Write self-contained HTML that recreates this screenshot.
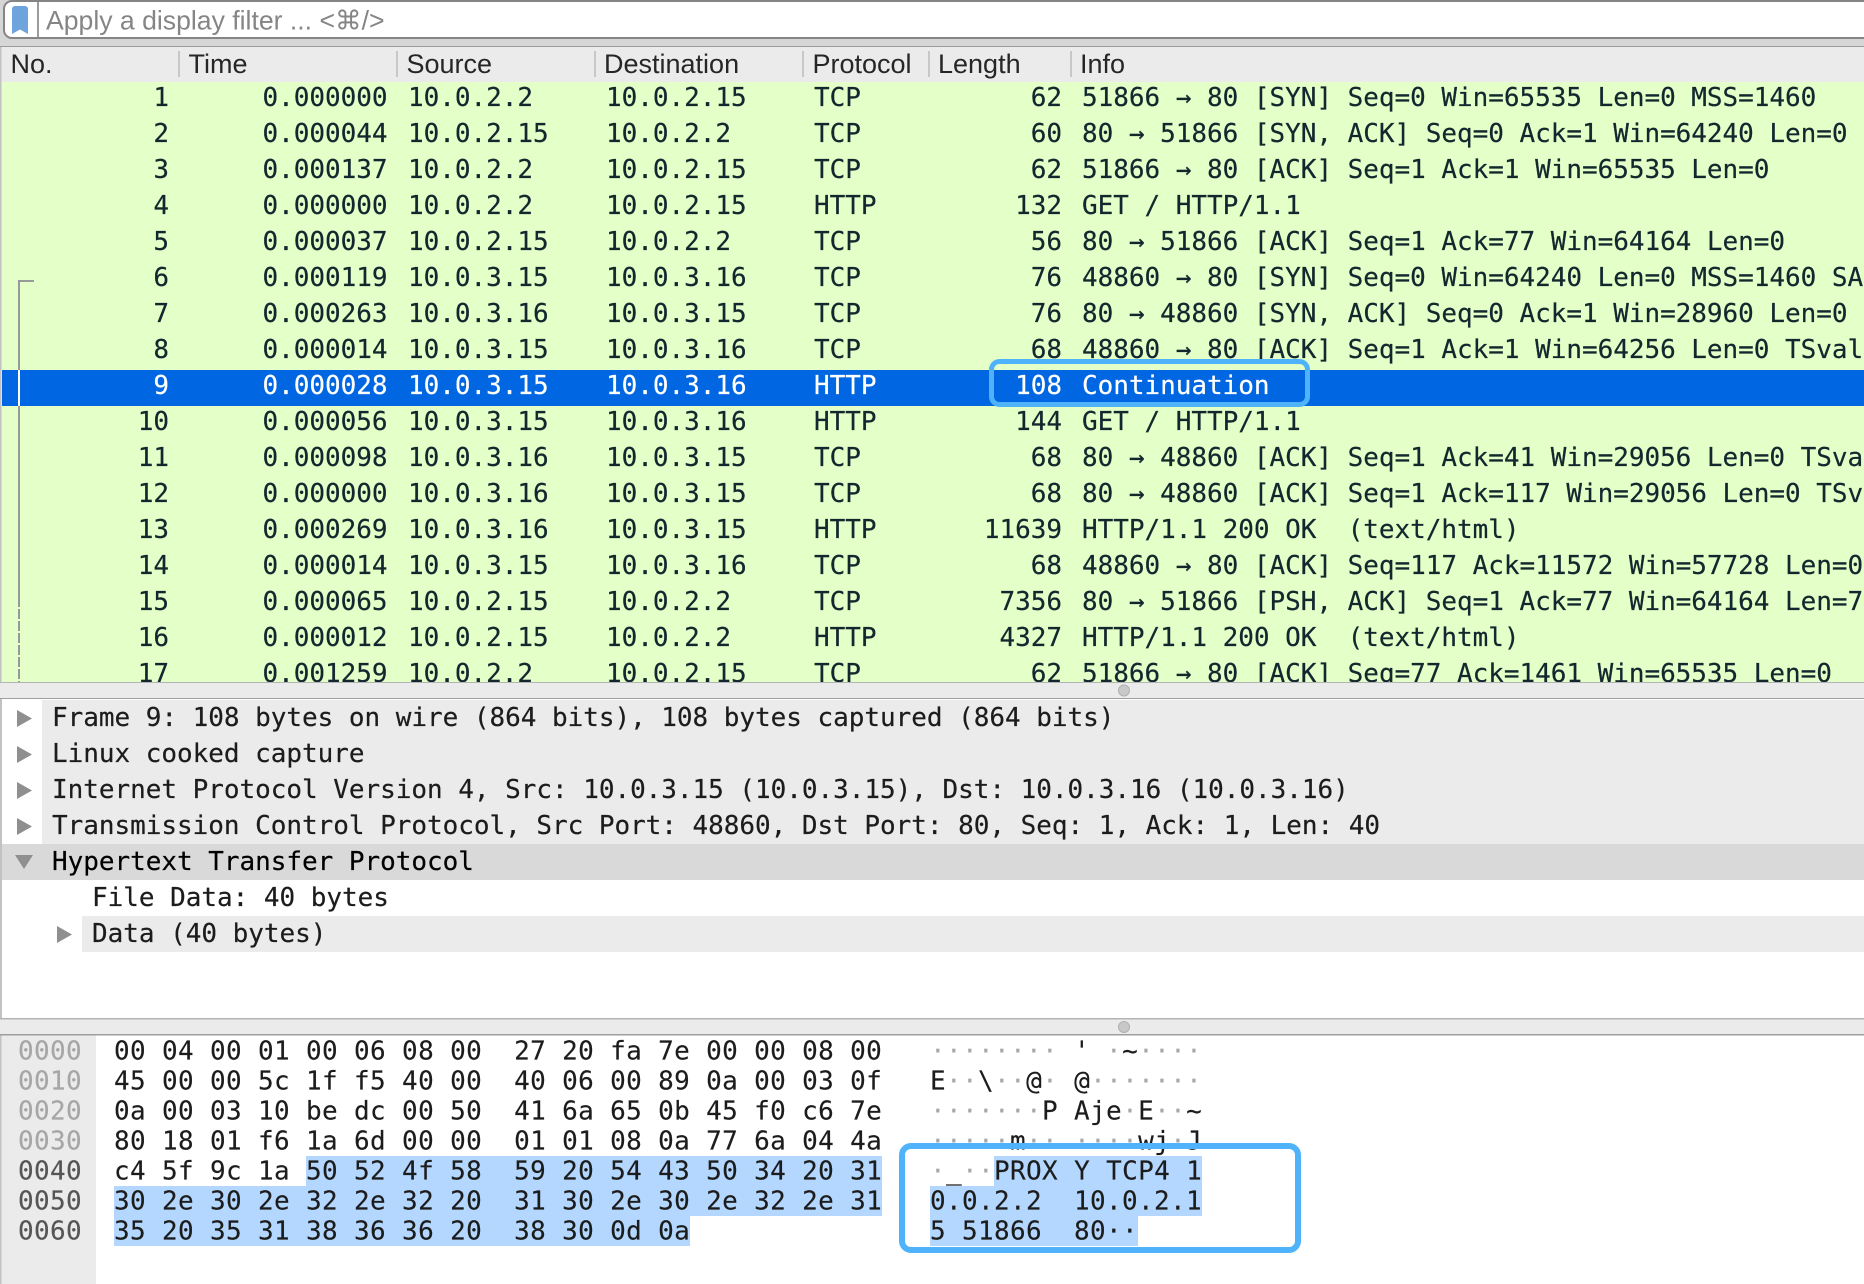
<!DOCTYPE html>
<html><head><meta charset="utf-8"><title>Wireshark</title>
<style>
html,body{margin:0;padding:0;background:#fff;width:1864px;height:1284px;overflow:hidden}
svg{display:block}
text{white-space:pre}
.m{font-family:"DejaVu Sans Mono","Liberation Mono",monospace;font-size:26px;letter-spacing:-.03px;fill:#12272e;stroke:#12272e;stroke-width:.2px}
.s{font-family:"Liberation Sans","DejaVu Sans",sans-serif;font-size:27px;fill:#262626}
.e{text-anchor:end}
.w{fill:#fff;stroke:#fff}
.t{fill:#1c1c1c;stroke:#1c1c1c}
.h{font-family:"DejaVu Sans Mono","Liberation Mono",monospace;font-size:26px;letter-spacing:.35px;fill:#1c1c1c;stroke:#1c1c1c;stroke-width:.15px}
.d{fill:#a8a8a8;stroke:none}
.o1{fill:#a6a6a6;stroke:#a6a6a6}
.o2{fill:#555;stroke:#555}
</style></head><body>
<svg xmlns="http://www.w3.org/2000/svg" width="1864" height="1284" viewBox="0 0 1864 1284">
<defs><clipPath id="lc"><rect x="0" y="82" width="1864" height="600"/></clipPath></defs>
<rect width="1864" height="1284" fill="#fff"/>
<!-- filter bar -->
<rect x="0" y="0" width="1864" height="47" fill="#d6d6d6"/>
<rect x="4" y="1" width="1880" height="37" rx="8" fill="#fff" stroke="#858585" stroke-width="2"/>
<path d="M12 9a3 3 0 0 1 3-3h10a3 3 0 0 1 3 3V34L20 29.500L12 34Z" fill="#6fa3dc"/>
<rect x="37" y="2" width="2" height="35" fill="#9c9c9c"/>
<text class="s" x="46" y="29.500" style="fill:#858585;font-size:26.6px">Apply a display filter ... &lt;⌘/&gt;</text>
<!-- header -->
<rect x="0" y="46" width="1864" height="1.500" fill="#9a9a9a"/>
<rect x="0" y="47" width="1864" height="35" fill="#ebebeb"/>
<g fill="#c8c8c8"><rect x="178" y="51" width="2" height="26"/><rect x="396" y="51" width="2" height="26"/><rect x="594" y="51" width="2" height="26"/><rect x="802" y="51" width="2" height="26"/><rect x="928" y="51" width="2" height="26"/><rect x="1070" y="51" width="2" height="26"/></g>
<g class="s"><text class="s" x="10.500" y="73">No.</text><text class="s" x="188.500" y="73">Time</text><text class="s" x="406.500" y="73">Source</text><text class="s" x="604" y="73">Destination</text><text class="s" x="812.500" y="73">Protocol</text><text class="s" x="938" y="73">Length</text><text class="s" x="1080" y="73">Info</text></g>
<!-- packet list -->
<rect x="0" y="82" width="1864" height="600" fill="#e4ffc7"/>
<rect x="0" y="47" width="1.500" height="635" fill="#c2c2c2"/>
<rect x="1.500" y="370" width="1" height="36" fill="#fff"/>
<rect x="2" y="370" width="1862" height="36" fill="#0066e2"/>
<g fill="#999"><rect x="18" y="280" width="16" height="2"/><rect x="18" y="280" width="2" height="90"/><rect x="18" y="406" width="2" height="191"/></g>
<rect x="18" y="370" width="2" height="36" fill="#fff"/>
<path d="M19 597V682" stroke="#999" stroke-width="2" stroke-dasharray="10 2" fill="none"/>
<g clip-path="url(#lc)">
<g><text class="m e" x="169" y="106">1</text><text class="m e" x="387.500" y="106">0.000000</text><text class="m" x="408" y="106">10.0.2.2</text><text class="m" x="606" y="106">10.0.2.15</text><text class="m" x="814" y="106">TCP</text><text class="m e" x="1062" y="106">62</text><text class="m" x="1082" y="106">51866 → 80 [SYN] Seq=0 Win=65535 Len=0 MSS=1460</text></g>
<g><text class="m e" x="169" y="142">2</text><text class="m e" x="387.500" y="142">0.000044</text><text class="m" x="408" y="142">10.0.2.15</text><text class="m" x="606" y="142">10.0.2.2</text><text class="m" x="814" y="142">TCP</text><text class="m e" x="1062" y="142">60</text><text class="m" x="1082" y="142">80 → 51866 [SYN, ACK] Seq=0 Ack=1 Win=64240 Len=0 MSS=1460</text></g>
<g><text class="m e" x="169" y="178">3</text><text class="m e" x="387.500" y="178">0.000137</text><text class="m" x="408" y="178">10.0.2.2</text><text class="m" x="606" y="178">10.0.2.15</text><text class="m" x="814" y="178">TCP</text><text class="m e" x="1062" y="178">62</text><text class="m" x="1082" y="178">51866 → 80 [ACK] Seq=1 Ack=1 Win=65535 Len=0</text></g>
<g><text class="m e" x="169" y="214">4</text><text class="m e" x="387.500" y="214">0.000000</text><text class="m" x="408" y="214">10.0.2.2</text><text class="m" x="606" y="214">10.0.2.15</text><text class="m" x="814" y="214">HTTP</text><text class="m e" x="1062" y="214">132</text><text class="m" x="1082" y="214">GET / HTTP/1.1</text></g>
<g><text class="m e" x="169" y="250">5</text><text class="m e" x="387.500" y="250">0.000037</text><text class="m" x="408" y="250">10.0.2.15</text><text class="m" x="606" y="250">10.0.2.2</text><text class="m" x="814" y="250">TCP</text><text class="m e" x="1062" y="250">56</text><text class="m" x="1082" y="250">80 → 51866 [ACK] Seq=1 Ack=77 Win=64164 Len=0</text></g>
<g><text class="m e" x="169" y="286">6</text><text class="m e" x="387.500" y="286">0.000119</text><text class="m" x="408" y="286">10.0.3.15</text><text class="m" x="606" y="286">10.0.3.16</text><text class="m" x="814" y="286">TCP</text><text class="m e" x="1062" y="286">76</text><text class="m" x="1082" y="286">48860 → 80 [SYN] Seq=0 Win=64240 Len=0 MSS=1460 SACK_PERM=1</text></g>
<g><text class="m e" x="169" y="322">7</text><text class="m e" x="387.500" y="322">0.000263</text><text class="m" x="408" y="322">10.0.3.16</text><text class="m" x="606" y="322">10.0.3.15</text><text class="m" x="814" y="322">TCP</text><text class="m e" x="1062" y="322">76</text><text class="m" x="1082" y="322">80 → 48860 [SYN, ACK] Seq=0 Ack=1 Win=28960 Len=0 MSS=1460</text></g>
<g><text class="m e" x="169" y="358">8</text><text class="m e" x="387.500" y="358">0.000014</text><text class="m" x="408" y="358">10.0.3.15</text><text class="m" x="606" y="358">10.0.3.16</text><text class="m" x="814" y="358">TCP</text><text class="m e" x="1062" y="358">68</text><text class="m" x="1082" y="358">48860 → 80 [ACK] Seq=1 Ack=1 Win=64256 Len=0 TSval=1</text></g>
<g><text class="m e w" x="169" y="394">9</text><text class="m e w" x="387.500" y="394">0.000028</text><text class="m w" x="408" y="394">10.0.3.15</text><text class="m w" x="606" y="394">10.0.3.16</text><text class="m w" x="814" y="394">HTTP</text><text class="m e w" x="1062" y="394">108</text><text class="m w" x="1082" y="394">Continuation</text></g>
<g><text class="m e" x="169" y="430">10</text><text class="m e" x="387.500" y="430">0.000056</text><text class="m" x="408" y="430">10.0.3.15</text><text class="m" x="606" y="430">10.0.3.16</text><text class="m" x="814" y="430">HTTP</text><text class="m e" x="1062" y="430">144</text><text class="m" x="1082" y="430">GET / HTTP/1.1</text></g>
<g><text class="m e" x="169" y="466">11</text><text class="m e" x="387.500" y="466">0.000098</text><text class="m" x="408" y="466">10.0.3.16</text><text class="m" x="606" y="466">10.0.3.15</text><text class="m" x="814" y="466">TCP</text><text class="m e" x="1062" y="466">68</text><text class="m" x="1082" y="466">80 → 48860 [ACK] Seq=1 Ack=41 Win=29056 Len=0 TSval=1</text></g>
<g><text class="m e" x="169" y="502">12</text><text class="m e" x="387.500" y="502">0.000000</text><text class="m" x="408" y="502">10.0.3.16</text><text class="m" x="606" y="502">10.0.3.15</text><text class="m" x="814" y="502">TCP</text><text class="m e" x="1062" y="502">68</text><text class="m" x="1082" y="502">80 → 48860 [ACK] Seq=1 Ack=117 Win=29056 Len=0 TSval=1</text></g>
<g><text class="m e" x="169" y="538">13</text><text class="m e" x="387.500" y="538">0.000269</text><text class="m" x="408" y="538">10.0.3.16</text><text class="m" x="606" y="538">10.0.3.15</text><text class="m" x="814" y="538">HTTP</text><text class="m e" x="1062" y="538">11639</text><text class="m" x="1082" y="538">HTTP/1.1 200 OK  (text/html)</text></g>
<g><text class="m e" x="169" y="574">14</text><text class="m e" x="387.500" y="574">0.000014</text><text class="m" x="408" y="574">10.0.3.15</text><text class="m" x="606" y="574">10.0.3.16</text><text class="m" x="814" y="574">TCP</text><text class="m e" x="1062" y="574">68</text><text class="m" x="1082" y="574">48860 → 80 [ACK] Seq=117 Ack=11572 Win=57728 Len=0</text></g>
<g><text class="m e" x="169" y="610">15</text><text class="m e" x="387.500" y="610">0.000065</text><text class="m" x="408" y="610">10.0.2.15</text><text class="m" x="606" y="610">10.0.2.2</text><text class="m" x="814" y="610">TCP</text><text class="m e" x="1062" y="610">7356</text><text class="m" x="1082" y="610">80 → 51866 [PSH, ACK] Seq=1 Ack=77 Win=64164 Len=7300</text></g>
<g><text class="m e" x="169" y="646">16</text><text class="m e" x="387.500" y="646">0.000012</text><text class="m" x="408" y="646">10.0.2.15</text><text class="m" x="606" y="646">10.0.2.2</text><text class="m" x="814" y="646">HTTP</text><text class="m e" x="1062" y="646">4327</text><text class="m" x="1082" y="646">HTTP/1.1 200 OK  (text/html)</text></g>
<g><text class="m e" x="169" y="682">17</text><text class="m e" x="387.500" y="682">0.001259</text><text class="m" x="408" y="682">10.0.2.2</text><text class="m" x="606" y="682">10.0.2.15</text><text class="m" x="814" y="682">TCP</text><text class="m e" x="1062" y="682">62</text><text class="m" x="1082" y="682">51866 → 80 [ACK] Seq=77 Ack=1461 Win=65535 Len=0</text></g>
</g>
<!-- splitter 1 -->
<rect x="0" y="682" width="1864" height="17" fill="#ebebeb"/>
<rect x="0" y="682" width="1864" height="1" fill="#b4b4b4"/>
<rect x="0" y="698" width="1864" height="1.500" fill="#9e9e9e"/>
<circle cx="1124" cy="690.500" r="5.500" fill="#c8c8c8" stroke="#b0b0b0"/>
<!-- tree -->
<rect x="0" y="699" width="1864" height="319" fill="#fff"/>
<rect x="0" y="699" width="2" height="319" fill="#c2c2c2"/>
<rect x="42" y="700" width="1822" height="144" fill="#ebebeb"/>
<rect x="2" y="844" width="1862" height="36" fill="#d9d9d9"/>
<rect x="82" y="916" width="1782" height="36" fill="#ebebeb"/>
<g fill="#8f8f8f">
<path d="M17 710L32 718.500L17 727Z"/><path d="M17 746L32 754.500L17 763Z"/><path d="M17 782L32 790.500L17 799Z"/><path d="M17 818L32 826.500L17 835Z"/>
<path d="M15 855H33L24 869Z"/>
<path d="M57 926L72 934.500L57 943Z"/>
</g>
<g>
<text class="m t" x="52" y="726">Frame 9: 108 bytes on wire (864 bits), 108 bytes captured (864 bits)</text>
<text class="m t" x="52" y="762">Linux cooked capture</text>
<text class="m t" x="52" y="798">Internet Protocol Version 4, Src: 10.0.3.15 (10.0.3.15), Dst: 10.0.3.16 (10.0.3.16)</text>
<text class="m t" x="52" y="834">Transmission Control Protocol, Src Port: 48860, Dst Port: 80, Seq: 1, Ack: 1, Len: 40</text>
<text class="m" style="fill:#000;stroke:#000" x="52" y="870">Hypertext Transfer Protocol</text>
<text class="m t" x="92" y="906">File Data: 40 bytes</text>
<text class="m t" x="92" y="942">Data (40 bytes)</text>
</g>
<!-- splitter 2 -->
<rect x="0" y="1018" width="1864" height="17" fill="#ebebeb"/>
<rect x="0" y="1018" width="1864" height="1.500" fill="#b4b4b4"/>
<rect x="0" y="1034" width="1864" height="1.500" fill="#9e9e9e"/>
<circle cx="1124" cy="1027" r="5.500" fill="#c8c8c8" stroke="#b0b0b0"/>
<!-- hex gutter -->
<rect x="0" y="1035.500" width="96" height="248.500" fill="#ebebeb"/>
<rect x="0" y="1035.500" width="1.500" height="248.500" fill="#c2c2c2"/>
<g fill="#b3d7ff">
<rect x="306" y="1156" width="576" height="30"/>
<rect x="114" y="1186" width="768" height="30"/>
<rect x="114" y="1216" width="576" height="30"/>
<rect x="994" y="1156" width="208" height="30"/>
<rect x="930" y="1186" width="272" height="30"/>
<rect x="930" y="1216" width="208" height="30"/>
</g>
<g>
<text class="h o1" x="18" y="1059.500">0000</text>
<text class="h o1" x="18" y="1089.500">0010</text>
<text class="h o1" x="18" y="1119.500">0020</text>
<text class="h o1" x="18" y="1149.500">0030</text>
<text class="h o2" x="18" y="1179.500">0040</text>
<text class="h o2" x="18" y="1209.500">0050</text>
<text class="h o2" x="18" y="1239.500">0060</text>
<text class="h" x="114" y="1059.500">00 04 00 01 00 06 08 00  27 20 fa 7e 00 00 08 00</text>
<text class="h" x="114" y="1089.500">45 00 00 5c 1f f5 40 00  40 06 00 89 0a 00 03 0f</text>
<text class="h" x="114" y="1119.500">0a 00 03 10 be dc 00 50  41 6a 65 0b 45 f0 c6 7e</text>
<text class="h" x="114" y="1149.500">80 18 01 f6 1a 6d 00 00  01 01 08 0a 77 6a 04 4a</text>
<text class="h" x="114" y="1179.500">c4 5f 9c 1a 50 52 4f 58  59 20 54 43 50 34 20 31</text>
<text class="h" x="114" y="1209.500">30 2e 30 2e 32 2e 32 20  31 30 2e 30 2e 32 2e 31</text>
<text class="h" x="114" y="1239.500">35 20 35 31 38 36 36 20  38 30 0d 0a</text>
<text class="h" x="930" y="1059.500"><tspan class="d">········</tspan> ' <tspan class="d">·</tspan>~<tspan class="d">····</tspan></text>
<text class="h" x="930" y="1089.500">E<tspan class="d">··</tspan>\<tspan class="d">··</tspan>@<tspan class="d">·</tspan> @<tspan class="d">·······</tspan></text>
<text class="h" x="930" y="1119.500"><tspan class="d">·······</tspan>P Aje<tspan class="d">·</tspan>E<tspan class="d">··</tspan>~</text>
<text class="h" x="930" y="1149.500"><tspan class="d">·····</tspan>m<tspan class="d">··</tspan> <tspan class="d">····</tspan>wj<tspan class="d">·</tspan>J</text>
<text class="h" x="930" y="1179.500"><tspan class="d">·</tspan>_<tspan class="d">··</tspan>PROX Y TCP4 1</text>
<text class="h" x="930" y="1209.500">0.0.2.2  10.0.2.1</text>
<text class="h" x="930" y="1239.500">5 51866  80··</text>
</g>
<!-- callouts -->
<rect x="991.500" y="361.500" width="316" height="43" rx="8" fill="none" stroke="#4fb3fb" stroke-width="5"/>
<rect x="902" y="1146" width="396" height="104" rx="9" fill="none" stroke="#4fb3fb" stroke-width="6"/>
</svg>
</body></html>
